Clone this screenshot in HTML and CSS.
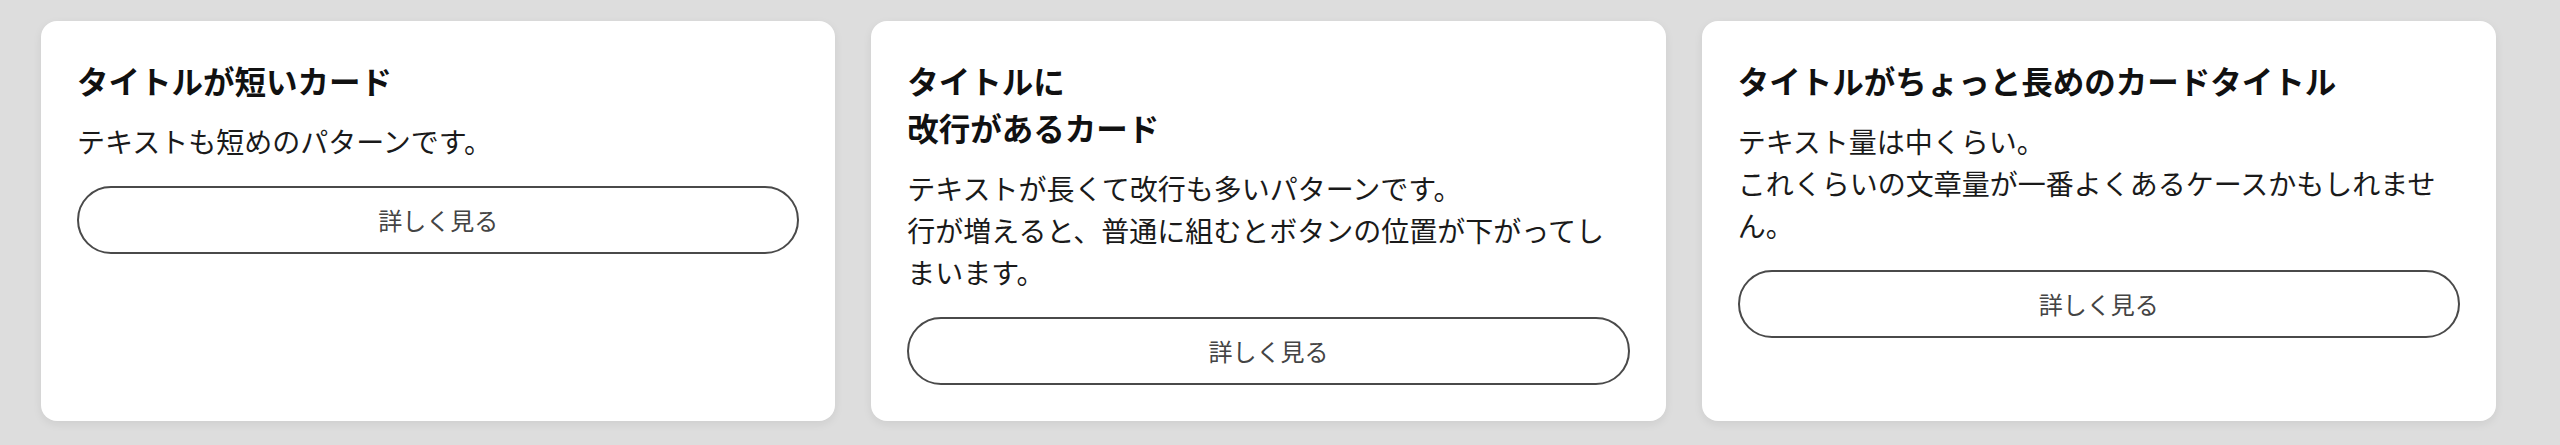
FILE: index.html
```html
<!DOCTYPE html>
<html lang="ja">
<head>
<meta charset="utf-8">
<title>カード一覧</title>
<link rel="stylesheet" href="styles.css">
</head>
<body>
  <main class="card-list">
    <article class="card">
      <h2 class="card-title">タイトルが短いカード</h2>
      <p class="card-text">テキストも短めのパターンです。</p>
      <a class="card-button" href="#">詳しく見る</a>
    </article>
    <article class="card">
      <h2 class="card-title">タイトルに<br>改行があるカード</h2>
      <p class="card-text">テキストが長くて改行も多いパターンです。<br>行が増えると、普通に組むとボタンの位置が下がってしまいます。</p>
      <a class="card-button" href="#">詳しく見る</a>
    </article>
    <article class="card">
      <h2 class="card-title">タイトルがちょっと長めのカードタイトル</h2>
      <p class="card-text">テキスト量は中くらい。<br>これくらいの文章量が一番よくあるケースかもしれません。</p>
      <a class="card-button" href="#">詳しく見る</a>
    </article>
  </main>
</body>
</html>
```

FILE: styles.css
```css
* {
  box-sizing: border-box;
}

html,
body {
  margin: 0;
  height: 100%;
}

body {
  background: #dddddd;
  font-family: "Noto Sans CJK JP", "Noto Sans", sans-serif;
  color: #111;
}

.card-list {
  display: grid;
  grid-template-columns: repeat(3, 1fr);
  gap: 36px;
  align-items: start;
  padding: 21px 64px 24px 41px;
}

.card {
  display: flex;
  flex-direction: column;
  align-self: stretch;
  background: #fff;
  border-radius: 16px;
  padding: 36px;
  box-shadow: 0 3px 10px rgba(0, 0, 0, 0.07);
}

.card-title {
  margin: 0;
  font-size: 31.5px;
  line-height: 47px;
  font-weight: 700;
  color: #111;
}

.card-text {
  margin: 16px 0 0;
  font-size: 28px;
  line-height: 42px;
  color: #1a1a1a;
}

.card-button {
  display: block;
  margin-top: 24px;
  padding: 14px 16px;
  border: 2px solid #4a4a4a;
  border-radius: 999px;
  font-size: 24px;
  line-height: 36px;
  text-align: center;
  color: #444;
  text-decoration: none;
}
```
